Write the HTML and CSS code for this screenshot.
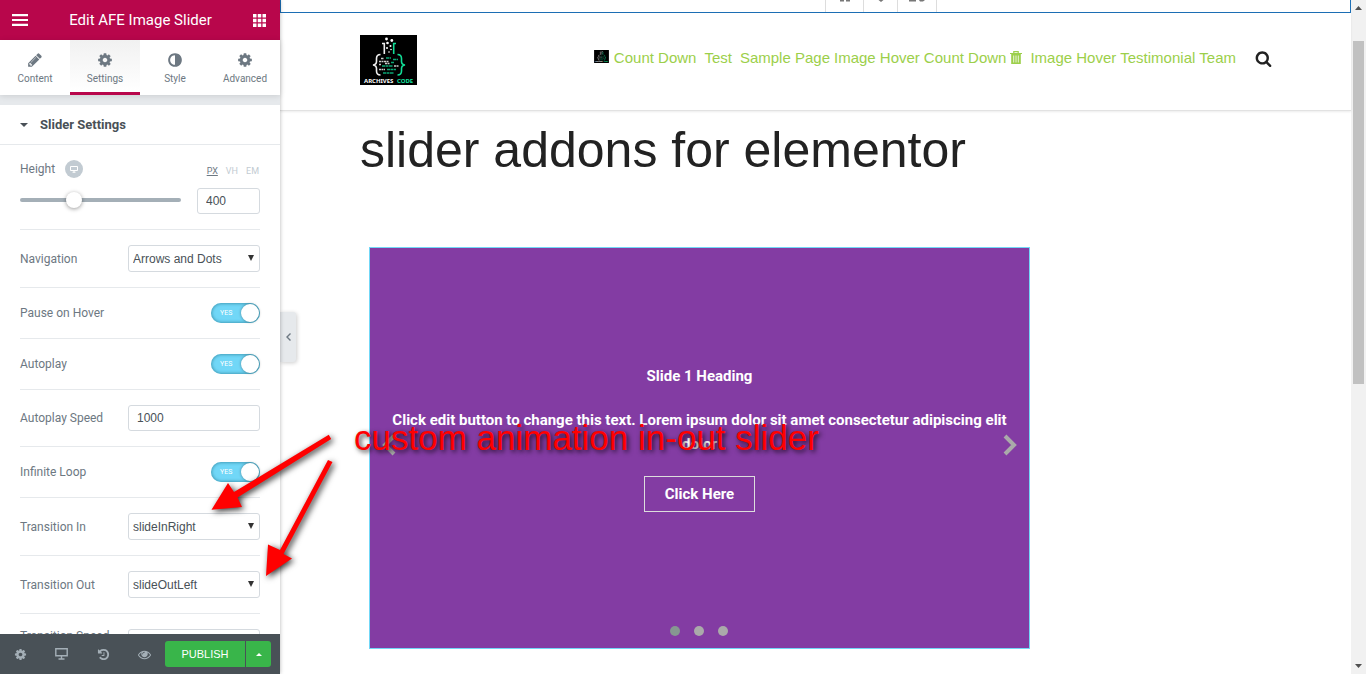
FILE: index.html
```html
<!DOCTYPE html>
<html lang="en">
<head>
<meta charset="utf-8">
<title>Edit AFE Image Slider</title>
<link rel="stylesheet" href="styles.css">
</head>
<body>
<svg class="sprite" aria-hidden="true">
  <symbol id="cog" viewBox="0 0 1792 1792"><path d="M1152 896q0-106-75-181t-181-75-181 75-75 181 75 181 181 75 181-75 75-181zm512-109v222q0 12-8 23t-20 13l-185 28q-19 54-39 91 35 50 107 138 10 12 10 25t-9 23q-27 37-99 108t-94 71q-12 0-26-9l-138-108q-44 23-91 38-16 136-29 186-7 28-36 28h-222q-14 0-24.500-8.500t-11.500-21.500l-28-184q-49-16-90-37l-141 107q-10 9-25 9-14 0-25-11-126-114-165-168-7-10-7-23 0-12 8-23 15-21 51-66.500t54-70.500q-27-50-41-99l-183-27q-13-2-21-12.500t-8-23.500v-222q0-12 8-23t19-13l186-28q14-46 39-92-40-57-107-138-10-12-10-24 0-10 9-23 26-36 98.500-107.500t94.500-71.500q13 0 26 10l138 107q44-23 91-38 16-136 29-186 7-28 36-28h222q14 0 24.500 8.500t11.500 21.500l28 184q49 16 90 37l142-107q9-9 24-9 13 0 25 10 129 119 165 170 7 8 7 22 0 12-8 23-15 21-51 66.500t-54 70.500q26 50 41 98l183 28q13 2 21 12.500t8 23.500z"/></symbol>
  <symbol id="brand" viewBox="0 0 57 50">
    <rect width="57" height="50" fill="#000"/>
    <g fill="#fff"><circle cx="26.500" cy="4" r="1.400"/><circle cx="31.800" cy="5.500" r="1.400"/><circle cx="27.500" cy="8" r="1.300"/><circle cx="30.500" cy="11" r="1"/><circle cx="27" cy="13" r="1"/><circle cx="31" cy="14.500" r=".8"/><circle cx="29" cy="17" r=".8"/></g>
    <path d="M22 8.500h2.300V19M20.500 19.500q-4 0-4 4v3q0 3-3.500 3.500 3.500.5 3.500 3.500v2.500q0 4 4 4" fill="none" stroke="#eee" stroke-width="1.600"/>
    <path d="M36 8.500h-2.300V19M37.500 19.500q4 0 4 4v3q0 3 3.500 3.500-3.500.5-3.500 3.500v2.500q0 4-4 4" fill="none" stroke="#12dc96" stroke-width="1.600"/>
    <path d="M21 23.500h3M19 26.500h10M19 29.500h2M34 31h5M19 34.500h6M25 28.500h5" stroke="#ccc" stroke-width="1.300" stroke-dasharray="2 .5"/>
    <path d="M26 23h5M33 24.500h5M31 27.500h3M22 31h11M27 34.500h9M23 38h11" stroke="#0ca676" stroke-width="1.400" stroke-dasharray="3 .5"/>
    <text x="4" y="48" class="brand-name" fill="#fff">ARCHIVES <tspan x="37" fill="#15e0a0">CODE</tspan></text>
  </symbol>
</svg>

<div class="app">
  <aside class="panel">
    <header class="panel-head">
      <button class="bare" aria-label="Menu"><svg width="16" height="12" viewBox="0 0 16 12"><path d="M0 1.200h16M0 6h16M0 10.800h16" stroke="#fff" stroke-width="2.200"/></svg></button>
      <h1>Edit AFE Image Slider</h1>
      <button class="bare" aria-label="Widgets"><svg width="13" height="13" viewBox="0 0 13 13" fill="#fff"><path d="M0 0h3.500v3.500H0zM4.750 0h3.500v3.500h-3.500zM9.500 0H13v3.500H9.500zM0 4.750h3.500v3.500H0zM4.750 4.750h3.500v3.500h-3.500zM9.500 4.750H13v3.500H9.500zM0 9.500h3.500V13H0zM4.750 9.500h3.500V13h-3.500zM9.500 9.500H13V13H9.500z"/></svg></button>
    </header>
    <nav class="tabs">
      <button><svg class="tab-icon" viewBox="0 0 1792 1792"><path d="M491 1536l91-91-235-235-91 91v107h128v128h107zm523-928q0-22-22-22-10 0-17 7l-542 542q-7 7-7 17 0 22 22 22 10 0 17-7l542-542q7-7 7-17zm-54-192l416 416-832 832h-416v-416zm683 96q0 53-37 90l-166 166-416-416 166-165q36-38 90-38 53 0 91 38l235 234q37 39 37 91z"/></svg>Content</button>
      <button class="active"><svg class="tab-icon"><use href="#cog"/></svg>Settings</button>
      <button><svg class="tab-icon" viewBox="0 0 1792 1792"><path d="M896 1440v-1088q-148 0-273 73t-198 198-73 273 73 273 198 198 273 73zm768-544q0 209-103 385.500t-279.500 279.500-385.500 103-385.500-103-279.500-279.500-103-385.500 103-385.500 279.500-279.500 385.500-103 385.500 103 279.500 279.500 103 385.500z"/></svg>Style</button>
      <button><svg class="tab-icon"><use href="#cog"/></svg>Advanced</button>
    </nav>
    <section class="settings">
      <h2><svg width="8" height="4" viewBox="0 0 8 4"><path d="M0 0h8L4 4z"/></svg>Slider Settings</h2>
      <div class="controls">
        <div class="control stacked">
          <div class="line">
            <label for="height">Height</label>
            <button class="device" aria-label="Desktop"><svg width="8" height="7" viewBox="0 0 8 7"><path d="M.5.5h7v4h-7zM2.500 6.200h3M4 4.500v2" fill="none" stroke="#fff"/></svg></button>
            <div class="units"><button class="on">PX</button><button>VH</button><button>EM</button></div>
          </div>
          <div class="line">
            <input class="range" type="range" min="100" max="1045" value="400" aria-label="Height slider">
            <input class="field small" id="height" type="text" value="400">
          </div>
        </div>
        <div class="control"><label for="nav">Navigation</label><span class="pick"><select id="nav"><option>Arrows and Dots</option></select><svg viewBox="0 0 6 6"><path d="M0 0h6L3 6z"/></svg></span></div>
        <div class="control"><label for="pause">Pause on Hover</label><span class="switch"><input id="pause" type="checkbox" checked><span>YES</span></span></div>
        <div class="control"><label for="auto">Autoplay</label><span class="switch"><input id="auto" type="checkbox" checked><span>YES</span></span></div>
        <div class="control"><label for="speed">Autoplay Speed</label><input class="field" id="speed" type="text" value="1000"></div>
        <div class="control"><label for="loop">Infinite Loop</label><span class="switch"><input id="loop" type="checkbox" checked><span>YES</span></span></div>
        <div class="control"><label for="tin">Transition In</label><span class="pick"><select id="tin"><option>slideInRight</option></select><svg viewBox="0 0 6 6"><path d="M0 0h6L3 6z"/></svg></span></div>
        <div class="control"><label for="tout">Transition Out</label><span class="pick"><select id="tout"><option>slideOutLeft</option></select><svg viewBox="0 0 6 6"><path d="M0 0h6L3 6z"/></svg></span></div>
        <div class="control top"><label for="tspeed">Transition Speed</label><input class="field" id="tspeed" type="text"></div>
      </div>
    </section>
    <footer class="panel-foot">
      <button class="tool" aria-label="Settings"><svg width="13" height="13"><use href="#cog"/></svg></button>
      <button class="tool" aria-label="Responsive"><svg width="13" height="12" viewBox="0 0 13 12"><path d="M.8.8h11.400v7H.8zM3.500 11h6M6.500 8v3" fill="none" stroke="#a4afb7" stroke-width="1.400"/></svg></button>
      <button class="tool" aria-label="History"><svg width="13" height="13" viewBox="0 0 1792 1792"><path d="M1664 896q0 156-61 298t-164 245-245 164-298 61q-172 0-327-72.500t-264-204.500q-7-10-6.500-22.500t8.500-20.500l137-138q10-9 25-9 16 2 23 12 73 95 179 147t225 52q104 0 198.500-40.500t163.500-109.500 109.500-163.500 40.500-198.500-40.500-198.500-109.500-163.500-163.500-109.500-198.500-40.500q-98 0-188 35.500t-160 101.500l137 138q31 30 14 69-17 40-59 40h-448q-26 0-45-19t-19-45v-448q0-42 40-59 39-17 69 14l130 129q107-101 244.500-156.500t284.500-55.500q156 0 298 61t245 164 164 245 61 298zm-640-288v448q0 14-9 23t-23 9h-320q-14 0-23-9t-9-23v-64q0-14 9-23t23-9h224v-352q0-14 9-23t23-9h64q14 0 23 9t9 23z"/></svg></button>
      <button class="tool" aria-label="Preview"><svg width="13" height="13" viewBox="0 0 1792 1792"><path d="M1664 960q-152-236-381-353 61 104 61 225 0 185-131.500 316.500t-316.500 131.500-316.500-131.500-131.500-316.500q0-121 61-225-229 117-381 353 133 205 333.500 326.500t434.500 121.500 434.500-121.500 333.500-326.500zm-720-384q0-20-14-34t-34-14q-125 0-214.500 89.500t-89.500 214.500q0 20 14 34t34 14 34-14 14-34q0-86 61-147t147-61q20 0 34-14t14-34zm848 384q0 34-20 69-140 230-376.500 368.500t-499.500 138.500-499.500-139-376.500-368q-20-35-20-69t20-69q140-229 376.500-368t499.500-139 499.500 139 376.500 368q20 35 20 69z"/></svg></button>
      <div class="publish"><button>PUBLISH</button><button class="more" aria-label="Save options"><svg width="6" height="3" viewBox="0 0 6 3"><path d="M0 3h6L3 0z" fill="#fff"/></svg></button></div>
    </footer>
  </aside>

  <main class="preview">
    <button class="collapse" aria-label="Hide panel"><svg width="5" height="8" viewBox="0 0 5 8"><path d="M4.500.5L1 4l3.500 3.500" fill="none" stroke="#6d7882" stroke-width="1.400"/></svg></button>
    <div class="topbar">
      <div class="topbar-cells">
        <span><svg width="10" height="2" viewBox="0 0 10 2"><path d="M0 0h4v1.500H0zM6 0h4v1.500H6z"/></svg></span>
        <span><svg width="10" height="2" viewBox="0 0 10 2"><path d="M2.500 0h5L5 2z"/></svg></span>
        <span><svg width="17" height="2" viewBox="0 0 17 2"><path d="M0 0h7v1.500H0zM10 0h6l-2 1.500h-3z"/></svg></span>
      </div>
    </div>
    <header class="site-head">
      <a href="#" aria-label="Archives Code"><svg class="logo"><use href="#brand"/></svg></a>
      <nav class="menu">
        <a href="#" class="wide"><svg class="mini"><use href="#brand"/></svg>Count Down</a>
        <a href="#" class="wide">Test</a>
        <a href="#">Sample Page</a>
        <a href="#">Image Hover</a>
        <a href="#">Count Down</a>
        <a href="#"><svg class="bin" width="12" height="13" viewBox="0 0 12 13"><path d="M0 2.500h12M3.800 2.500V.7h4.400v1.800" fill="none" stroke="#9ccf4a" stroke-width="1.200"/><path d="M1.200 3h9.600v10H1.200z" fill="#9ccf4a"/><path d="M3.700 4.500v7M6 4.500v7M8.300 4.500v7" stroke="#fff" stroke-width=".8"/></svg>Image Hover</a>
        <a href="#">Testimonial</a>
        <a href="#">Team</a>
      </nav>
      <button class="bare search" aria-label="Search"><svg width="17" height="17" viewBox="0 0 1792 1792" fill="#222"><path d="M1216 832q0-185-131.500-316.500t-316.500-131.500-316.500 131.500-131.500 316.500 131.500 316.500 316.500 131.500 316.500-131.500 131.500-316.500zm512 832q0 52-38 90t-90 38q-54 0-90-38l-343-342q-179 124-399 124-143 0-273.500-55.500t-225-150-150-225-55.500-273.500 55.500-273.500 150-225 225-150 273.500-55.500 273.500 55.500 225 150 150 225 55.500 273.500q0 220-124 399l343 343q37 37 37 90z"/></svg></button>
    </header>
    <article class="page">
      <h2>slider addons for elementor</h2>
      <section class="slider">
        <button class="bare" aria-label="Previous"><svg width="14" height="22" viewBox="0 0 14 22"><path d="M12 2L3 11l9 9" fill="none" stroke="#aaa" stroke-width="4"/></svg></button>
        <div class="slide">
          <h3>Slide 1 Heading</h3>
          <p>Click edit button to change this text. Lorem ipsum dolor sit amet consectetur adipiscing elit dolor</p>
          <a class="cta" href="#">Click Here</a>
        </div>
        <button class="bare" aria-label="Next"><svg width="14" height="22" viewBox="0 0 14 22"><path d="M2 2l9 9-9 9" fill="none" stroke="#aaa" stroke-width="4"/></svg></button>
        <div class="dots"><button class="on" aria-label="Slide 1"></button><button aria-label="Slide 2"></button><button aria-label="Slide 3"></button></div>
      </section>
    </article>
  </main>

  <div class="scroll" aria-hidden="true">
    <svg width="7" height="4" viewBox="0 0 7 4"><path d="M0 4h7L3.500 0z"/></svg>
    <div class="rail"><div class="thumb"></div></div>
    <svg width="7" height="4" viewBox="0 0 7 4"><path d="M0 0h7L3.500 4z"/></svg>
  </div>

  <svg class="arrows" width="360" height="600" viewBox="0 0 360 600" aria-hidden="true">
    <g fill="red"><path d="M328.800 434.800L234 492l-6-9-16.500 26.800 30.500-2.800-4.500-9.500L331.200 439z"/><path d="M328 460l-48 90-12-5.500-2 31.500 26-17.500-8.500-4.500L332.500 462z"/></g>
  </svg>
  <p class="note">custom animation in-out slider</p>
</div>
</body>
</html>
```
FILE: styles.css
```css
* { box-sizing: border-box; }
body { margin: 0; background: #fff; font-family: Roboto, sans-serif; }
h1, h2, h3, p { margin: 0; }
button { border: 0; padding: 0; background: none; font: inherit; color: inherit; }
svg { display: block; flex: none; }
a { text-decoration: none; color: inherit; }
.sprite { position: absolute; width: 0; height: 0; }
.bare { display: flex; align-items: center; justify-content: center; }
.app { position: relative; display: flex; height: 100vh; overflow: hidden; }

/* Editor panel */
.panel { position: relative; z-index: 2; flex: none; width: 280px; display: flex; flex-direction: column; background: #fff; color: #6d7882; font-size: 12px; box-shadow: 0 0 4px rgba(0,0,0,.3); }
.panel-head { flex: none; display: flex; align-items: center; justify-content: space-between; height: 40px; padding: 0 14px 0 12px; background: #b8064b; color: #fff; }
.panel-head h1 { font-size: 15px; font-weight: 400; line-height: 18px; }
.tabs { position: relative; flex: none; display: flex; height: 55px; box-shadow: 0 1px 6px rgba(0,0,0,.12); }
.tabs button { flex: 1; display: flex; flex-direction: column; align-items: center; gap: 4px; padding-top: 12px; font-size: 10px; line-height: 13px; border-bottom: 3px solid transparent; }
.tabs .active { background: linear-gradient(#f1f1f1, #fff); border-bottom-color: #b8064b; }
.tab-icon { width: 16px; height: 16px; fill: #6d7882; }
.settings { flex: 1; min-height: 0; overflow: hidden; border-top: 10px solid #e6e9ec; }
.settings h2 { display: flex; align-items: center; gap: 12px; height: 40px; padding: 0 20px; border-bottom: 1px solid #e6e9ec; color: #495157; font-size: 13px; fill: #495157; }
.controls { padding: 0 20px; }
.control { display: flex; align-items: center; justify-content: space-between; padding: 15px 0; border-bottom: 1px solid #e6e9ec; line-height: 18px; }
.control.stacked { flex-direction: column; align-items: stretch; gap: 10px; }
.control.top { align-items: flex-start; }
.control.top label { line-height: 14px; }
.line { display: flex; align-items: center; }
.device { display: flex; align-items: center; justify-content: center; width: 18px; height: 18px; margin-left: 10px; border-radius: 50%; background: #c2cbd2; }
.units { display: flex; gap: 8px; margin-left: auto; padding: 4px 1px 0 0; font-size: 9px; line-height: 12px; color: #c2cbd2; }
.units .on { color: #6d7882; text-decoration: underline; }
.field, .pick select { width: 132px; height: 26px; padding: 0 8px; border: 1px solid #d5dadf; border-radius: 3px; background: #fff; color: #495157; font: 12px "Liberation Sans", Arial, sans-serif; }
.field.small { width: 63px; }
.range { flex: 1; min-width: 0; height: 16px; margin: 0 16px 2px 0; appearance: none; background: none; }
.range::-webkit-slider-runnable-track { height: 4px; border-radius: 4px; background: #a4afb7; }
.range::-webkit-slider-thumb { appearance: none; width: 16px; height: 16px; margin-top: -6px; border-radius: 50%; background: #fff; box-shadow: 0 1px 4px rgba(0,0,0,.4); }
.pick { position: relative; }
.pick select { display: block; height: 27px; padding: 0 4px; appearance: none; }
.pick svg { position: absolute; right: 6px; top: 10px; width: 6px; height: 6px; fill: #333; pointer-events: none; }
.switch { position: relative; display: flex; width: 49px; height: 20px; color: #fff; font-size: 7px; line-height: 20px; }
.switch span { position: absolute; left: 9px; top: 0; pointer-events: none; }
.switch input { display: flex; justify-content: flex-end; width: 100%; height: 100%; margin: 0; padding: 1px; appearance: none; border-radius: 10px; background: #71d7f7; box-shadow: inset 0 0 3px 1px rgba(40,125,150,.6); }
.switch input::after { content: ""; width: 18px; height: 18px; border-radius: 50%; background: #fff; box-shadow: 0 0 3px rgba(0,0,0,.4); }
.panel-foot { flex: none; display: flex; align-items: center; height: 40px; background: #495157; fill: #a4afb7; }
.tool { flex: 1; display: flex; align-items: center; justify-content: center; height: 100%; }
.publish { display: flex; gap: 1px; height: 26px; margin-right: 9px; color: #fff; font: 11px "Liberation Sans", Arial, sans-serif; }
.publish button { width: 80px; border-radius: 3px 0 0 3px; background: #39b54a; }
.publish .more { display: flex; align-items: center; justify-content: center; width: 25px; border-radius: 0 3px 3px 0; }

/* Site preview */
.preview { position: relative; flex: 1; min-width: 0; font-family: "Liberation Sans", Arial, sans-serif; }
.collapse { position: absolute; z-index: 1; left: 0; top: 312px; display: flex; align-items: center; justify-content: center; width: 16px; height: 50px; border-radius: 0 3px 3px 0; background: #e6e9ec; box-shadow: 1px 1px 4px rgba(0,0,0,.2); }
.topbar { height: 13px; padding-left: 544px; border: 1px solid #1d6fb5; border-top: 0; }
.topbar-cells { display: flex; height: 12px; fill: #777; }
.topbar-cells span { display: flex; justify-content: center; width: 34px; border-right: 1px solid #ddd; }
.topbar-cells span:first-child { width: 39px; border-left: 1px solid #ddd; }
.topbar-cells span:last-child { width: 39px; }
.site-head { display: flex; align-items: center; height: 98px; padding: 0 79px 3px 80px; border-bottom: 1px solid #e2e2e2; box-shadow: 0 1px 2px rgba(0,0,0,.08); }
.logo { width: 57px; height: 50px; }
.brand-name { font: bold 6px "Noto Sans", sans-serif; }
.menu { display: flex; gap: 4px; margin: 0 19px 4px auto; color: #9ccf4a; font-size: 15px; line-height: 20px; white-space: nowrap; }
.menu .wide { margin-right: 4px; }
.menu a { display: flex; }
.mini { width: 15px; height: 13px; margin: 2px 5px 0 0; }
.bin { margin: 3px 8px 0 0; }
.search { margin-bottom: 4px; }
.page { padding: 14px 80px; }
.page h2 { color: #222; font-size: 50px; font-weight: 400; line-height: 50px; }
.slider { position: relative; display: flex; align-items: center; max-width: 661px; height: 402px; margin: 72px 0 0 9px; padding: 0 12px; border: 1px solid #71d7f7; background: #833ca3; color: #fff; font: bold 15px/24px Roboto, sans-serif; }
.slider > .bare { margin-top: -6px; }
.slide { flex: 1; min-width: 0; padding-bottom: 20px; text-align: center; }
.slide h3 { font-size: 15px; line-height: 24px; }
.slide p { margin: 20px -10px; }
.cta { display: inline-block; padding: 5px 20px; border: 1px solid #ddd; }
.dots { position: absolute; left: 0; right: 2px; bottom: 12px; display: flex; justify-content: center; gap: 14px; }
.dots button { width: 10px; height: 10px; border-radius: 50%; background: #aaa; }
.dots .on { background: #869791; }

/* Window scroll bar */
.scroll { flex: none; display: flex; flex-direction: column; align-items: center; width: 15px; padding: 6px 0; background: #f1f1f1; fill: #505050; }
.rail { flex: 1; width: 11px; padding: 31px 0; }
.thumb { height: 58%; background: #c1c1c1; }

/* Annotation */
.arrows { position: absolute; z-index: 3; left: 0; top: 0; filter: drop-shadow(2px 2px 3px rgba(0,0,0,.8)); pointer-events: none; }
.note { position: absolute; z-index: 3; left: 354px; top: 418px; color: red; font: 35px/40px "Liberation Sans", Arial, sans-serif; text-shadow: 2px 2px 5px rgba(0,0,0,.8); white-space: nowrap; }
```
